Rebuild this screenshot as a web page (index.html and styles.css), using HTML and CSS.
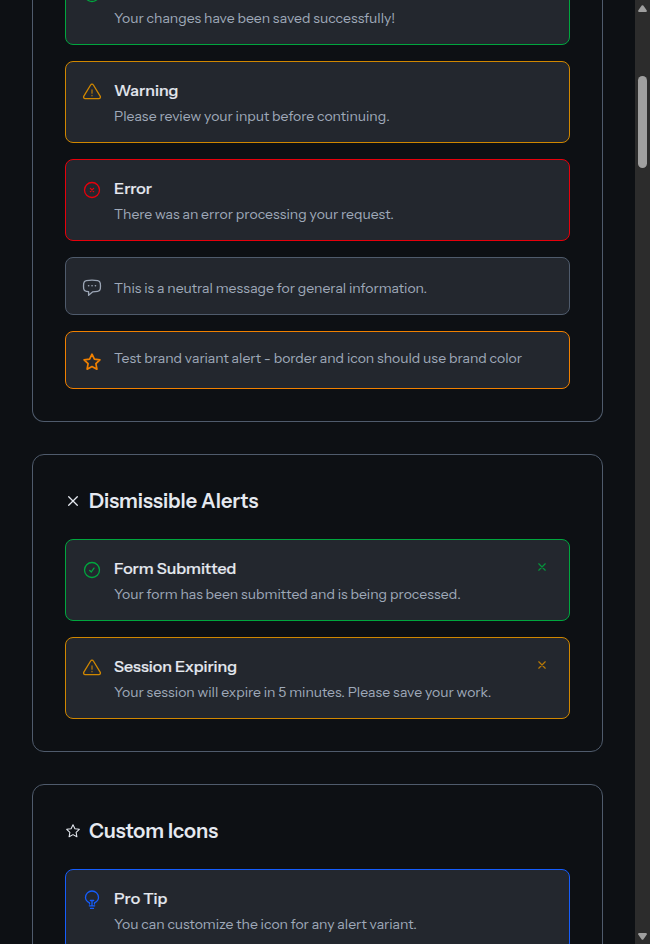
FILE: index.html
```html
<!DOCTYPE html>
<html lang="en">
<head>
<meta charset="utf-8">
<title>Alerts</title>
<link rel="stylesheet" href="styles.css">
</head>
<body>
<svg class="defs" width="0" height="0" aria-hidden="true">
  <symbol id="check" viewBox="0 0 20 20"><circle cx="10" cy="10" r="7.5"/><path d="M7.700 10.500l1.600 1.500 2.700-3.900"/></symbol>
  <symbol id="warn" viewBox="0 0 20 20"><path d="M8.600 3a1.600 1.600 0 0 1 2.800 0l6.900 11.400a1.600 1.600 0 0 1-1.400 2.300H3.100a1.600 1.600 0 0 1-1.400-2.300z"/><path class="mark" d="M10 8v3.200M10 13.400v.4"/></symbol>
  <symbol id="error" viewBox="0 0 20 20"><circle cx="10" cy="10" r="7.500"/><path d="M8.400 8.400l3.200 3.200M11.600 8.400l-3.200 3.200"/></symbol>
  <symbol id="chat" viewBox="0 0 20 20"><path d="M4.300 2.600Q10 1.700 15.700 2.600 18 3 18.300 5.300 18.700 8.300 18.300 10.800 18 13 15.700 13.300L10.500 13.900 6.600 17.300V13.700L4.300 13.300Q2 13 1.700 10.800 1.300 8.300 1.700 5.300 2 3 4.300 2.600z"/><path class="dots" d="M6.600 7.800h.1M10 7.800h.1M13.400 7.800h.1"/></symbol>
  <symbol id="star" viewBox="0 0 20 20"><path d="M10 2.200l2.400 5 5.500.7-4 3.800 1 5.500-4.900-2.700-4.900 2.700 1-5.500-4-3.800 5.500-.7z"/></symbol>
  <symbol id="bulb" viewBox="0 0 20 20"><path d="M7.500 14v-1.200C5 11.600 3.500 9.800 3.500 7.500a6.500 6.500 0 0 1 13 0c0 2.300-1.500 4.100-4 5.300V14M10 15.500v-5M8.300 10.500h3.400M7.300 15.800h5.400M8.500 18.400h3"/></symbol>
  <symbol id="close" viewBox="0 0 16 16"><path d="M3.700 3.700l8.600 8.600M12.300 3.700l-8.600 8.600"/></symbol>
</svg>
<div class="window">
  <main class="content">
    <section class="card card-continued">
      <div class="stack">
        <article class="alert success">
          <svg class="icon"><use href="#check"/></svg>
          <div class="body"><p class="below-title">Your changes have been saved successfully!</p></div>
        </article>
        <article class="alert warning">
          <svg class="icon"><use href="#warn"/></svg>
          <div class="body"><h3>Warning</h3><p>Please review your input before continuing.</p></div>
        </article>
        <article class="alert error">
          <svg class="icon"><use href="#error"/></svg>
          <div class="body"><h3>Error</h3><p>There was an error processing your request.</p></div>
        </article>
        <article class="alert neutral">
          <svg class="icon"><use href="#chat"/></svg>
          <div class="body"><p>This is a neutral message for general information.</p></div>
        </article>
        <article class="alert brand">
          <svg class="icon"><use href="#star"/></svg>
          <div class="body"><p class="flush">Test brand variant alert - border and icon should use brand color</p></div>
        </article>
      </div>
    </section>

    <section class="card">
      <h2><svg class="head-icon"><use href="#close"/></svg>Dismissible Alerts</h2>
      <div class="stack">
        <article class="alert success">
          <svg class="icon"><use href="#check"/></svg>
          <div class="body"><h3>Form Submitted</h3><p>Your form has been submitted and is being processed.</p></div>
          <button class="dismiss" aria-label="Dismiss"><svg><use href="#close"/></svg></button>
        </article>
        <article class="alert warning">
          <svg class="icon"><use href="#warn"/></svg>
          <div class="body"><h3>Session Expiring</h3><p>Your session will expire in 5 minutes. Please save your work.</p></div>
          <button class="dismiss" aria-label="Dismiss"><svg><use href="#close"/></svg></button>
        </article>
      </div>
    </section>

    <section class="card">
      <h2><svg class="head-icon"><use href="#star"/></svg>Custom Icons</h2>
      <div class="stack">
        <article class="alert info">
          <svg class="icon"><use href="#bulb"/></svg>
          <div class="body"><h3>Pro Tip</h3><p>You can customize the icon for any alert variant.</p></div>
        </article>
      </div>
    </section>
  </main>
  <div class="scrollbar">
    <svg class="arrow" viewBox="0 0 9 7"><path d="M3.700 .6Q4.500-.3 5.300 .6L8.800 5.500Q9 7 8 7H1Q0 7 .2 5.500z"/></svg>
    <div class="track"><div class="thumb"></div></div>
    <svg class="arrow" viewBox="0 0 9 7"><path d="M3.700 6.400Q4.500 7.300 5.300 6.400L8.800 1.500Q9 0 8 0H1Q0 0 .2 1.500z"/></svg>
  </div>
</div>
</body>
</html>
```
FILE: styles.css
```css
* { box-sizing: border-box; margin: 0; }
body {
  background: #0d1014;
  color: #e5e9f0;
  font-family: "Instrument Sans", Inter, "Liberation Sans", sans-serif;
  overflow: hidden;
}
.defs { display: block; }
.window { display: flex; height: 944px; overflow: hidden; }
.content { flex: 1; padding: 0 32px; display: flex; flex-direction: column; gap: 32px; }
.card { border: 1px solid #4f5b6c; border-radius: 12px; padding: 32px; flex-shrink: 0; }
.card-continued { margin-top: -37px; border-top: 0; border-radius: 0 0 12px 12px; padding-top: 0; }
h2 { display: flex; align-items: center; gap: 8px; height: 28px; margin-bottom: 24px; font-size: 20px; line-height: 28px; font-weight: 600; white-space: nowrap; }
.head-icon { width: 16px; height: 16px; }
.stack { display: flex; flex-direction: column; gap: 16px; }
.alert { display: flex; gap: 12px; min-height: 58px; padding: 16px; border: 1px solid var(--tone); border-radius: 8px; background: #23272e; }
.success { --tone: #00a63e; }
.warning { --tone: #d08700; }
.error { --tone: #e7000b; }
.neutral { --tone: #4f5b6c; }
.brand { --tone: #f08000; }
.info { --tone: #155dfc; }
svg { fill: none; stroke: currentColor; stroke-width: 1.3; stroke-linecap: round; stroke-linejoin: round; flex: none; }
.icon { width: 20px; height: 20px; margin-top: 4px; color: var(--tone); }
.neutral .icon { color: #9ca6b6; }
.brand .icon { stroke-width: 1.700; }
.dots { stroke-width: 1.600; }
.mark { opacity: .8; }
.body { flex: 1; white-space: nowrap; }
h3 { font-size: 16px; line-height: 24px; font-weight: 500; -webkit-text-stroke: .2px currentColor; }
p { margin-top: 4px; font-size: 14px; line-height: 20px; color: #9fa9b9; }
.flush { margin-top: 0; }
.below-title { margin-top: 28px; }
.neutral .icon { margin-top: 4px; }
.dismiss { width: 24px; height: 24px; padding: 5px 6px 7px; margin-right: -1px; border: 0; background: none; color: var(--tone); }
.dismiss svg { display: block; width: 12px; height: 12px; stroke-width: 1.600; opacity: .85; }
.scrollbar { width: 15px; background: #2c2c2c; display: flex; flex-direction: column; align-items: center; padding: 5px 0 4px; }
.arrow { width: 9px; height: 7px; fill: #9f9f9f; stroke: none; }
.track { flex: 1; padding-top: 64px; }
.thumb { width: 9px; height: 92px; border-radius: 5px; background: #9f9f9f; }
```
